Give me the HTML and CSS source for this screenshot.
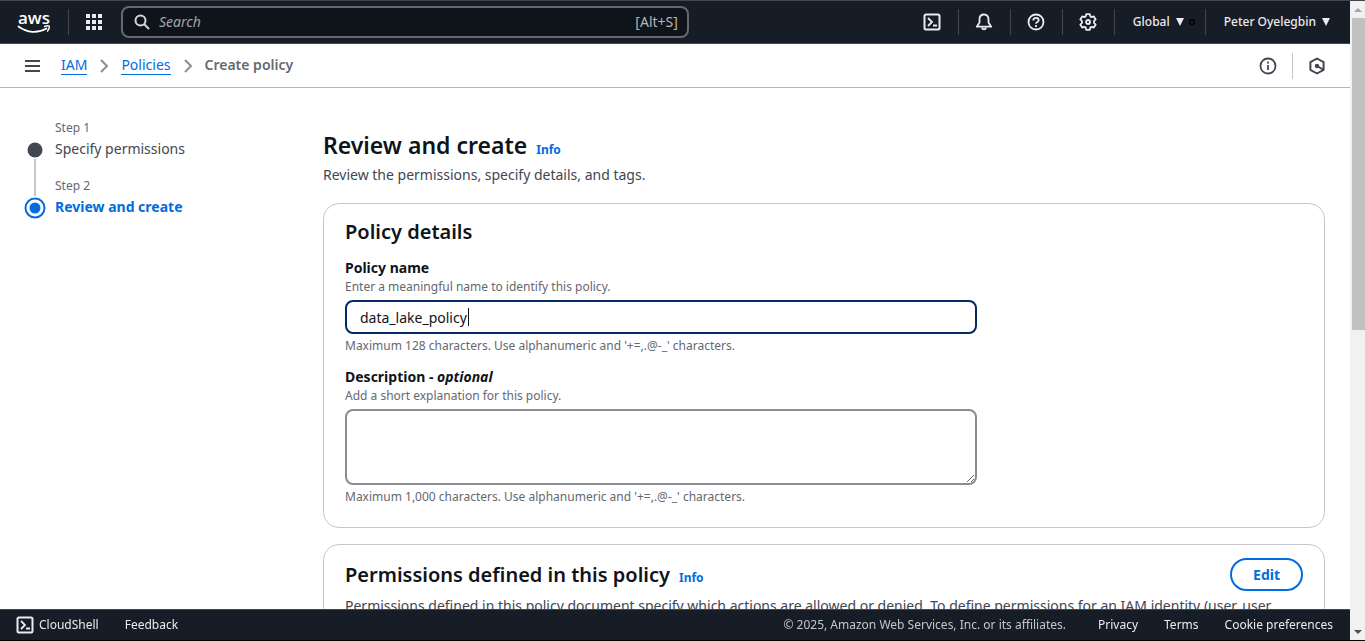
FILE: index.html
```html
<!DOCTYPE html>
<html lang="en">
<head>
<meta charset="utf-8">
<title>Create policy | IAM</title>
<link rel="stylesheet" href="styles.css">
</head>
<body>
<div class="window">
  <div class="app">
    <header class="topnav">
      <a class="logo" href="#" aria-label="AWS home">
        <svg class="logo-svg" width="34" height="26" viewBox="0 0 34 26">
          <text class="logo-text" x="17" y="15" text-anchor="middle">aws</text>
          <path d="M1.500 17.500c8.500 6.500 19.500 7 28 2" fill="none" stroke="#fff" stroke-width="1.700" stroke-linecap="round"/>
          <path d="M27.500 17.500c2-1 4-.8 4.800-.4.300 1.500-.6 3.600-1.800 5" fill="none" stroke="#fff" stroke-width="1.400" stroke-linecap="round"/>
        </svg>
      </a>
      <span class="divider"></span>
      <button class="icon-btn apps" aria-label="Services">
        <svg width="18" height="18" viewBox="0 0 18 18" fill="#ebebf0"><path d="M1 1h4v4H1zM7 1h4v4H7zM13 1h4v4h-4zM1 7h4v4H1zM7 7h4v4H7zM13 7h4v4h-4zM1 13h4v4H1zM7 13h4v4H7zM13 13h4v4h-4z"/></svg>
      </button>
      <label class="search">
        <svg width="16" height="16" viewBox="0 0 16 16" fill="none" stroke="#d5d5da" stroke-width="2"><circle cx="6.500" cy="6.500" r="5"/><path d="M10 10l5 5"/></svg>
        <input class="search-input" type="text" placeholder="Search" aria-label="Search">
        <span class="shortcut">[Alt+S]</span>
      </label>
      <div class="tools">
        <button class="icon-btn tool" aria-label="CloudShell">
          <svg width="18" height="18" viewBox="0 0 18 18" fill="none" stroke="#ebebf0" stroke-width="2"><rect x="1.500" y="1.500" width="15" height="15" rx="1.500"/><path d="M5 5l4 4-4 4M10 12.500h4" stroke-width="1.800"/></svg>
        </button>
        <button class="icon-btn tool" aria-label="Notifications">
          <svg width="18" height="18" viewBox="0 0 18 18" fill="none" stroke="#ebebf0" stroke-width="1.800" stroke-linejoin="round"><path d="M9 1.500C6 1.500 4.500 3.700 4.500 6.500v3L1.800 13.700h14.400l-2.700-4.200v-3C13.500 3.700 12 1.500 9 1.500z"/><path d="M7 14.500c.4 2.400 3.600 2.400 4 0"/></svg>
        </button>
        <button class="icon-btn tool" aria-label="Help">
          <svg width="18" height="18" viewBox="0 0 18 18" fill="none" stroke="#ebebf0" stroke-width="1.800"><circle cx="9" cy="9" r="7.500"/><path d="M6.300 7.500c0-3.700 5.400-3.400 5.400-.3 0 1.800-2.700 1.800-2.700 3.600M9 12v2"/></svg>
        </button>
        <button class="icon-btn tool" aria-label="Settings">
          <svg width="18" height="18" viewBox="0 0 18 18" fill="none" stroke="#ebebf0" stroke-width="1.800" stroke-linejoin="round"><path d="M7.200 1.200h3.600l.5 2.200 1.300.7 2.200-.7 1.900 3-1.700 1.700v1.800l1.700 1.700-1.900 3-2.200-.7-1.300.7-.5 2.200H7.200l-.5-2.200-1.300-.7-2.200.7-1.900-3L3 9.900V8.100L1.300 6.400l1.900-3 2.200.7 1.300-.7z"/><circle cx="9" cy="9" r="2"/></svg>
        </button>
        <button class="menu-btn region">Global <svg class="caret" width="8" height="8" viewBox="0 0 8 8"><path d="M0 0h8L4 8z" fill="#ebebf0"/></svg><svg class="dot" width="8" height="8" viewBox="0 0 8 8"><circle cx="4" cy="4" r="2.400" fill="none" stroke="#000" stroke-width="1.200"/></svg></button>
        <button class="menu-btn account">Peter Oyelegbin <svg class="caret" width="8" height="8" viewBox="0 0 8 8"><path d="M0 0h8L4 8z" fill="#ebebf0"/></svg></button>
      </div>
    </header>

    <nav class="crumbs" aria-label="Breadcrumbs">
      <button class="icon-btn burger" aria-label="Open navigation">
        <svg width="16" height="14" viewBox="0 0 16 14" stroke="#424650" stroke-width="2"><path d="M0 2h15M0 7h15M0 12h15"/></svg>
      </button>
      <a class="crumb-link" href="#">IAM</a>
      <svg class="chevron" width="10" height="14" viewBox="0 0 10 14" fill="none" stroke="#8c8c94" stroke-width="2"><path d="M1 1l6 6-6 6"/></svg>
      <a class="crumb-link" href="#">Policies</a>
      <svg class="chevron" width="10" height="14" viewBox="0 0 10 14" fill="none" stroke="#8c8c94" stroke-width="2"><path d="M1 1l6 6-6 6"/></svg>
      <span class="crumb-current">Create policy</span>
      <div class="crumb-tools">
        <button class="icon-btn" aria-label="Information">
          <svg width="18" height="18" viewBox="0 0 18 18" fill="none" stroke="#424650" stroke-width="1.800"><circle cx="9" cy="9" r="7.500"/><path d="M9 4.500v2M9 8v5"/></svg>
        </button>
        <button class="icon-btn hex" aria-label="Assistant">
          <svg width="18" height="18" viewBox="0 0 18 18" fill="none" stroke="#424650" stroke-width="2" stroke-linejoin="round"><path d="M9 1.500l6.600 3.700v7.600L9 16.500l-6.600-3.700V5.200z"/><path d="M9 9l6 3.500"/><circle cx="9" cy="9" r="1.200" fill="#424650"/></svg>
        </button>
      </div>
    </nav>

    <div class="body">
      <ol class="steps">
        <li class="step">
          <span class="marker"><svg width="22" height="22" viewBox="0 0 22 22"><circle cx="11" cy="11" r="7.500" fill="#424650"/></svg><span class="line"></span></span>
          <span class="step-text"><span class="step-no">Step 1</span><span class="step-name">Specify permissions</span></span>
        </li>
        <li class="step">
          <span class="marker"><svg width="22" height="22" viewBox="0 0 22 22"><circle cx="11" cy="11" r="9.500" fill="none" stroke="#006ce0" stroke-width="2"/><circle cx="11" cy="11" r="5.500" fill="#006ce0"/></svg></span>
          <span class="step-text"><span class="step-no">Step 2</span><span class="step-name current">Review and create</span></span>
        </li>
      </ol>
      <main class="main">
        <div class="title-row"><h1 class="page-title">Review and create</h1><a class="info" href="#">Info</a></div>
        <p class="desc">Review the permissions, specify details, and tags.</p>

        <section class="card details">
          <h2 class="card-title">Policy details</h2>
          <div class="field">
            <label class="label" for="name">Policy name</label>
            <span class="hint">Enter a meaningful name to identify this policy.</span>
            <input class="input focused" id="name" type="text" value="data_lake_policy" autofocus>
            <span class="hint">Maximum 128 characters. Use alphanumeric and '+=,.@-_' characters.</span>
          </div>
          <div class="field">
            <label class="label" for="desc">Description - <em>optional</em></label>
            <span class="hint">Add a short explanation for this policy.</span>
            <textarea class="input area" id="desc"></textarea>
            <span class="hint">Maximum 1,000 characters. Use alphanumeric and '+=,.@-_' characters.</span>
          </div>
        </section>

        <section class="card">
          <div class="card-head">
            <div class="title-row"><h2 class="card-title">Permissions defined in this policy</h2><a class="info" href="#">Info</a></div>
            <button class="edit">Edit</button>
          </div>
          <p class="desc">Permissions defined in this policy document specify which actions are allowed or denied. To define permissions for an IAM identity (user, user</p>
        </section>
      </main>
    </div>

    <footer class="footer">
      <button class="foot-btn"><svg width="18" height="18" viewBox="0 0 18 18" fill="none" stroke="#ebebf0" stroke-width="2"><rect x="1.500" y="1.500" width="15" height="15" rx="1.500"/><path d="M5 5l4 4-4 4M10 12.500h4" stroke-width="1.800"/></svg>CloudShell</button>
      <a class="foot-link" href="#">Feedback</a>
      <span class="copyright">© 2025, Amazon Web Services, Inc. or its affiliates.</span>
      <a class="foot-link" href="#">Privacy</a>
      <a class="foot-link" href="#">Terms</a>
      <a class="foot-link" href="#">Cookie preferences</a>
    </footer>
  </div>
  <div class="scrollbar" aria-hidden="true">
    <svg width="8" height="4" viewBox="0 0 8 4"><path d="M0 4l4-4 4 4z" fill="#a3a3a3"/></svg>
    <div class="track"><div class="thumb"></div></div>
    <svg width="8" height="4" viewBox="0 0 8 4"><path d="M0 0l4 4 4-4z" fill="#505050"/></svg>
  </div>
</div>
</body>
</html>
```
FILE: styles.css
```css
* { box-sizing: border-box; }
body {
  margin: 0;
  font-family: "Noto Sans", "Open Sans", sans-serif;
  font-size: 14px;
  line-height: 20px;
  color: #0f141a;
  background: #fff;
}
button, input, textarea { font: inherit; color: inherit; }
button { background: none; border: 0; padding: 0; }
h1, h2, p, ol { margin: 0; padding: 0; }
a { color: #006ce0; text-decoration: none; }
svg { display: block; flex: none; }

.window {
  display: flex;
  height: 100vh;
  overflow: hidden;
  border-top: 1px solid #424650;
  border-bottom: 1px solid #000;
}
.app { flex: 1; min-width: 0; display: flex; flex-direction: column; }

.topnav {
  flex: none;
  display: flex;
  align-items: center;
  height: 43px;
  padding: 0 20px 0 17px;
  background: #161d26;
  border-bottom: 1px solid #424650;
  color: #ebebf0;
}
.logo-svg { overflow: visible; }
.logo-text { font: 600 17px "Open Sans", sans-serif; fill: #fff; }
.divider { width: 1px; height: 26px; margin-left: 17px; background: #424650; }
.icon-btn { display: flex; align-items: center; justify-content: center; }
.apps { margin: 0 18px 0 16px; }
.search {
  flex: 1;
  display: flex;
  align-items: center;
  height: 32px;
  margin-right: 218px;
  padding: 0 9px 0 11px;
  gap: 9px;
  border: 2px solid #656871;
  border-radius: 8px;
  background: #0f141a;
}
.search-input {
  flex: 1;
  min-width: 0;
  border: 0;
  outline: 0;
  padding: 0;
  background: none;
}
.search-input::placeholder { font-style: italic; color: #a4a4ad; opacity: 1; }
.shortcut { color: #b4b4bb; }
.tools { display: flex; align-items: center; }
.tool { width: 52px; height: 26px; border-right: 1px solid #424650; }
.menu-btn { display: flex; align-items: center; height: 26px; font-size: 12px; font-weight: 500; }
.caret { margin-left: 6px; }
.region { padding: 0 9px 0 18px; border-right: 1px solid #424650; }
.dot { margin-left: 4px; }
.account { padding-left: 18px; }

.crumbs {
  flex: none;
  display: flex;
  align-items: center;
  height: 44px;
  padding: 0 24px 0 25px;
  border-bottom: 1px solid #b4b4bb;
}
.burger { margin-right: 20px; }
.crumb-link { line-height: 18px; border-bottom: 1px solid #006ce0; }
.chevron { margin: 0 11px 0 13px; }
.crumb-current { padding-bottom: 1px; line-height: 18px; font-weight: 600; color: #656871; }
.crumb-tools { display: flex; align-items: center; margin-left: auto; gap: 15px; }
.hex { height: 26px; padding-left: 15px; border-left: 1px solid #c6c6cd; }

.body {
  flex: 1;
  min-height: 0;
  overflow: hidden;
  display: grid;
  grid-template-columns: 258px 1fr;
  gap: 41px;
  padding: 30px 25px 0 24px;
}
.steps { list-style: none; }
.step { display: flex; gap: 9px; height: 58px; }
.marker { display: flex; flex-direction: column; align-items: center; padding-top: 21px; }
.line { flex: 1; width: 2px; margin: -2px 0 -20px; background: #c6c6cd; }
.step-text { display: flex; flex-direction: column; gap: 1px; }
.step-no { font-size: 12px; color: #656871; }
.step-name { color: #424650; }
.current { color: #006ce0; font-weight: 700; }

.main { min-width: 0; padding-top: 12px; }
.title-row { display: flex; align-items: baseline; gap: 9px; }
.page-title { font-size: 23px; line-height: 30px; font-weight: 600; }
.info { font-size: 12px; font-weight: 700; }
.desc { margin-top: 5px; color: #424650; }
.card {
  margin-top: 16px;
  padding: 13px 21px 21px;
  border: 1px solid #c6c6cd;
  border-radius: 16px;
}
.details { margin-top: 18px; padding-top: 14px; }
.card-title { font-size: 20px; line-height: 28px; font-weight: 600; }
.field { display: flex; flex-direction: column; width: 66%; margin-top: 12px; }
.label { font-weight: 700; line-height: 20px; }
.hint { font-size: 12px; line-height: 18px; color: #656871; }
.input {
  height: 34px;
  margin: 4px 0 3px;
  padding: 4px 13px;
  border: 2px solid #8c8c94;
  border-radius: 8px;
  outline: 0;
  background: #fff;
}
/* Steady text cursor after the value */
.focused {
  border-color: #002b66;
  caret-color: transparent;
  background: linear-gradient(#0f141a, #0f141a) 121px center / 1px 18px no-repeat #fff;
}
.area { height: 76px; resize: vertical; }
.card-head { display: flex; justify-content: space-between; align-items: center; }
.edit {
  height: 33px;
  padding: 0 21px;
  border: 2px solid #006ce0;
  border-radius: 17px;
  color: #006ce0;
  font-weight: 700;
}

.footer {
  flex: none;
  display: flex;
  align-items: center;
  gap: 26px;
  height: 31px;
  padding: 0 17px 0 16px;
  border-top: 1px solid #424650;
  background: #161d26;
  color: #ebebf0;
  font-size: 12px;
}
.foot-btn { display: flex; align-items: center; gap: 5px; }
.foot-link { color: #ebebf0; }
.copyright { margin: 0 6px 0 auto; color: #c6c6cd; }

.scrollbar {
  width: 15px;
  flex: none;
  display: flex;
  flex-direction: column;
  align-items: center;
  padding: 7px 0 6px;
  background: #f1f1f1;
}
.track { flex: 1; align-self: stretch; padding: 6px 0 0 2px; }
.thumb { height: 51%; background: #c1c1c1; }
```
